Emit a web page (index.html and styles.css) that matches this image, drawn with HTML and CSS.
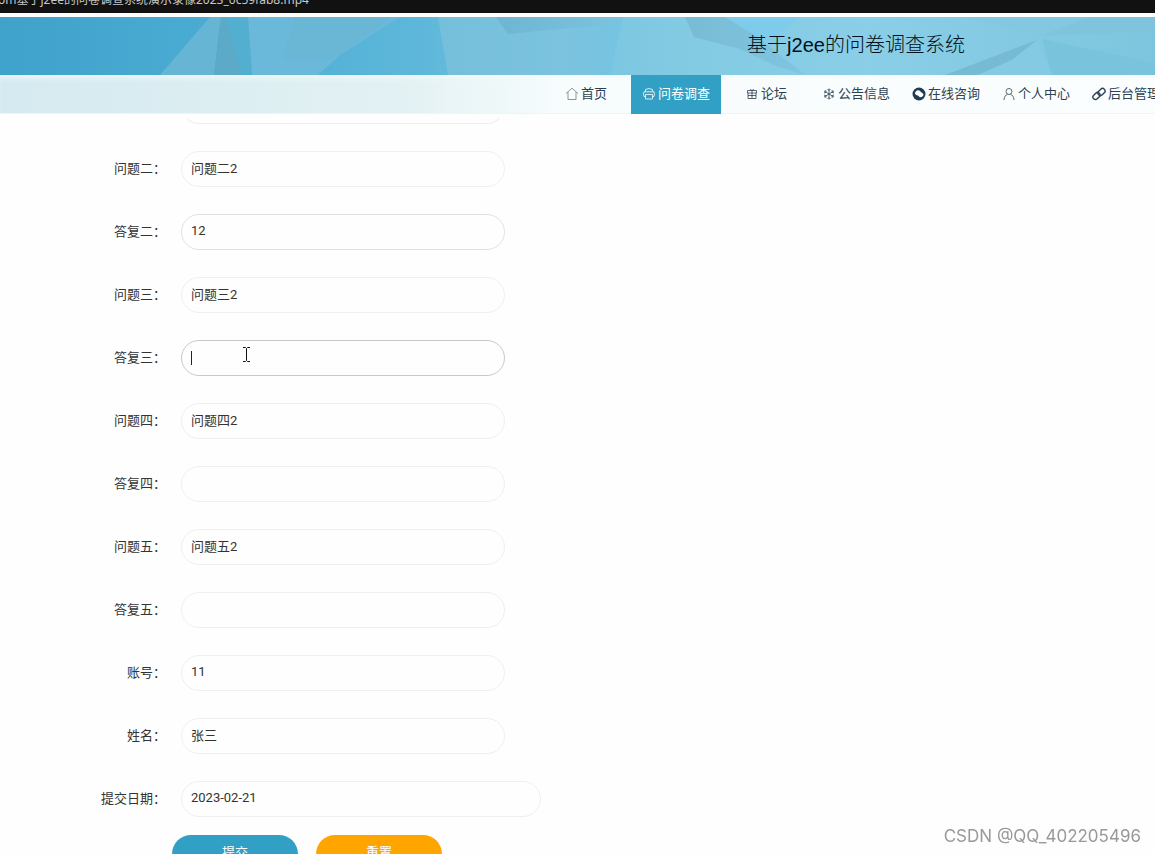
FILE: index.html
```html
<!DOCTYPE html>
<html lang="zh-CN">
<head>
<meta charset="utf-8">
<title>基于j2ee的问卷调查系统</title>
<link rel="stylesheet" href="styles.css">
</head>
<body>
<div class="titlebar"><span class="titlebar-text">om基于j2ee的问卷调查系统演示录像2023_0c59fab8.mp4</span></div>
<header class="banner">
  <svg class="banner-art" viewBox="0 0 1155 58" preserveAspectRatio="none" aria-hidden="true">
    <defs>
      <linearGradient id="sky"><stop offset="0" stop-color="#3fa2cb"/><stop offset=".2" stop-color="#4cadd3"/><stop offset=".36" stop-color="#5db7da"/><stop offset=".56" stop-color="#81c9e2"/><stop offset=".75" stop-color="#8acee7"/><stop offset="1" stop-color="#7dc5de"/></linearGradient>
      <linearGradient id="mist"><stop offset="0" stop-color="#76bfdb"/><stop offset=".7" stop-color="#7bc3df"/><stop offset="1" stop-color="#74c4e2"/></linearGradient>
      <linearGradient id="shade"><stop offset="0" stop-color="#78bbd4"/><stop offset="1" stop-color="#80c5e0"/></linearGradient>
      <linearGradient id="ridge"><stop offset="0" stop-color="#6db5d2"/><stop offset="1" stop-color="#7bc3de"/></linearGradient>
    </defs>
    <rect width="1155" height="58" fill="url(#sky)"/>
    <path d="M210 0L160 58H214L221 0Z" fill="#66b5d5"/>
    <path d="M221 0H228L243 58H214Z" fill="#5aaac8"/>
    <path d="M226 0H248L251 58H242L230 15Z" fill="#53afd0"/>
    <path d="M248 0H400L340 38L318 58H252Z" fill="#6ab8da"/>
    <path d="M295 0H392L332 42H283Z" fill="#69b6d5"/>
    <path d="M438 0H623L610 58H448Z" fill="url(#mist)"/>
    <path d="M496 0H622L616 7L550 13L508 17Z" fill="url(#ridge)"/>
    <path d="M685 0H725L755 18L805 58L776 49L740 32L694 20Z" fill="url(#shade)"/>
    <path d="M725 0H800L770 24L755 18Z" fill="#7fcbec"/>
    <path d="M945 58L1037 23L1012 43L978 58Z" fill="#76bad4"/>
    <path d="M1037 23L1012 43L978 58H1052Z" fill="#84cae2"/>
    <path d="M960 0H1090L1042 18Z" fill="#81c8e0"/>
    <path d="M1088 0H1155V14L1042 19Z" fill="#7ec4dd"/>
    <path d="M1042 22L1155 46V58H1052Z" fill="#79c3dc"/>
  </svg>
  <h1 class="banner-title">基于j2ee的问卷调查系统</h1>
</header>
<nav class="nav">
  <a class="nav-item" href="#"><svg class="icon faint" viewBox="0 0 14 14"><path d="M1 6.5L7 1.2L13 6.5M3 5V12.5H11V5"/></svg>首页</a>
  <a class="nav-item active" href="#"><svg class="icon" viewBox="0 0 14 14"><path d="M3.5 4.5V2.5Q7 .5 10.5 2.5V4.5M3.5 9.5H2Q1 7 2 4.8H12Q13 7 12 9.5H10.5M3.5 7.5H10.5V12H3.5Z"/></svg>问卷调查</a>
  <a class="nav-item" href="#"><svg class="icon" viewBox="0 0 14 14"><path d="M2.5 3.5H11.5V6H2.5ZM3 6V11.5H11V6M7 3.5V11.5M3 8.5H11M5 2.5L7 3.5L9 2.5"/></svg>论坛</a>
  <a class="nav-item" href="#"><svg class="icon" viewBox="0 0 14 14"><path d="M7 1.5V12.5M2 4L12 10M12 4L2 10M5.500 2L7 3.500L8.500 2M5.500 12L7 10.500L8.500 12M2 6L4 5.200L3.800 3M12 6L10 5.200L10.200 3M2 8L4 8.800L3.800 11M12 8L10 8.800L10.200 11"/></svg>公告信息</a>
  <a class="nav-item" href="#"><svg class="icon" viewBox="0 0 14 14"><circle class="solid" cx="7" cy="7" r="6.500"/><path class="cut" d="M3 7C3 3 7 2.500 8.500 4.500C9 6 11 5.500 11.500 7.500C11 10.500 8 11 6.500 9C5.500 8 4.500 8.500 3 7Z"/></svg>在线咨询</a>
  <a class="nav-item" href="#"><svg class="icon" viewBox="0 0 14 14"><circle cx="7" cy="4.500" r="3"/><path d="M2 13C2 9.500 4 8 5.500 7.200M8.500 7.200C10 8 12 9.500 12 13"/></svg>个人中心</a>
  <a class="nav-item" href="#"><svg class="icon bold" viewBox="0 0 14 14"><rect x="5.500" y="2.500" width="8" height="5" rx="2.500" transform="rotate(-45 9.500 5)"/><rect x=".5" y="6.500" width="8" height="5" rx="2.500" transform="rotate(-45 4.500 9)"/></svg>后台管理</a>
</nav>
<main class="content">
  <form class="form">
    <div class="row"><label for="a1">答复一：</label><input id="a1" class="light" type="text"></div>
    <div class="row"><label for="q2">问题二：</label><input id="q2" type="text" value="问题二2"></div>
    <div class="row"><label for="a2">答复二：</label><input id="a2" class="edged" type="text" value="12"></div>
    <div class="row"><label for="q3">问题三：</label><input id="q3" type="text" value="问题三2"></div>
    <div class="row"><label for="a3">答复三：</label><div class="field"><input id="a3" class="current" type="text"><span class="caret"></span><svg class="pointer" viewBox="0 0 9 17" aria-hidden="true"><path d="M1 1.500H3.500L4.500 2.500L5.500 1.500H8M4.500 2.500V14.500M1 15.500H3.500L4.500 14.500L5.500 15.500H8"/></svg></div></div>
    <div class="row"><label for="q4">问题四：</label><input id="q4" type="text" value="问题四2"></div>
    <div class="row"><label for="a4">答复四：</label><input id="a4" type="text"></div>
    <div class="row"><label for="q5">问题五：</label><input id="q5" type="text" value="问题五2"></div>
    <div class="row"><label for="a5">答复五：</label><input id="a5" type="text"></div>
    <div class="row"><label for="account">账号：</label><input id="account" type="text" value="11"></div>
    <div class="row"><label for="name">姓名：</label><input id="name" type="text" value="张三"></div>
    <div class="row"><label for="date">提交日期：</label><input id="date" class="wide" type="text" value="2023-02-21"></div>
    <div class="actions"><button class="btn" type="submit">提交</button><button class="btn reset" type="reset">重置</button></div>
  </form>
</main>
<div class="watermark">CSDN @QQ_402205496</div>
</body>
</html>
```
FILE: styles.css
```css
* {
  box-sizing: border-box;
}

body {
  margin: 0;
  height: 100vh;
  display: flex;
  flex-direction: column;
  overflow: hidden;
  background: #fdfefd;
  color: #333;
  font: 13px/20px Roboto, "Noto Sans CJK SC", sans-serif;
}

.titlebar {
  flex: none;
  display: flex;
  align-items: flex-end;
  height: 13px;
  padding-bottom: 4px;
  overflow: hidden;
  background: #111;
  color: #c8c8c8;
  font: 12px/18px "Noto Sans", "Noto Sans CJK SC", sans-serif;
  white-space: nowrap;
}

.titlebar-text {
  margin-left: -2px;
}

.banner {
  flex: none;
  position: relative;
  height: 58px;
  margin-top: 4px;
  padding-left: 541px;
}

.banner-art {
  position: absolute;
  inset: 0;
  width: 100%;
  height: 100%;
}

.banner-title {
  position: relative;
  width: 630px;
  margin: 0;
  color: #001020;
  font: 300 20px/56px "Liberation Sans", "Noto Sans CJK SC", sans-serif;
  text-align: center;
}

.nav {
  flex: none;
  display: flex;
  height: 39px;
  padding-left: 541px;
  border-bottom: 1px solid #eef5f6;
  background: linear-gradient(to right, #d5eaf0, #e2f1f3 400px, #f7fcfd 560px, #fbfefe);
  box-shadow: inset 0 6px 6px -4px #f4fafa;
}

.nav-item {
  flex: none;
  display: flex;
  align-items: center;
  justify-content: center;
  gap: 2px;
  width: 90px;
  height: 39px;
  padding-bottom: 2px;
  color: #2c4254;
  text-decoration: none;
}

.nav-item.active {
  background: #329fc4;
  color: #fff;
}

.icon {
  flex: none;
  width: 14px;
  height: 14px;
  fill: none;
  stroke: currentColor;
  stroke-width: 0.8;
}

.icon.faint {
  stroke: #6f7f88;
}

.icon.bold {
  stroke-width: 1.4;
}

.solid {
  fill: #1d3d55;
  stroke: none;
}

.cut {
  fill: #fff;
  stroke: none;
}

.content {
  flex: 1;
  min-height: 0;
  overflow: hidden;
}

.form {
  display: flex;
  flex-direction: column;
  gap: 27px;
  margin-top: -26px;
}

.row {
  display: flex;
  align-items: center;
  gap: 15px;
  height: 36px;
}

label {
  width: 166px;
  text-align: right;
}

input {
  width: 324px;
  height: 36px;
  padding: 0 9px 3px;
  border: 1px solid #efefef;
  border-radius: 18px;
  outline: none;
  background: transparent;
  color: #333;
  font: inherit;
}

.edged {
  border-color: #e2e2e2;
}

.light {
  border-color: transparent transparent #efefef;
}

.current {
  border-color: #c9c9c9;
}

.wide {
  width: 360px;
}

.field {
  position: relative;
  display: flex;
}

.caret {
  position: absolute;
  left: 10px;
  top: 11px;
  width: 1px;
  height: 14px;
  background: #222;
}

.pointer {
  position: absolute;
  left: 61px;
  top: 6px;
  width: 9px;
  height: 17px;
  fill: none;
  stroke: #111;
}

.actions {
  display: flex;
  gap: 18px;
  margin-top: -9px;
  padding-left: 172px;
}

.btn {
  width: 126px;
  height: 38px;
  padding: 0 0 2px;
  border: 0;
  border-radius: 20px;
  background: #329fc4;
  color: #fff;
  font: inherit;
}

.btn.reset {
  background: #ffa500;
}

.watermark {
  position: fixed;
  right: 14px;
  bottom: 8px;
  color: #999;
  font: 17px/20px Inter, sans-serif;
}
```
